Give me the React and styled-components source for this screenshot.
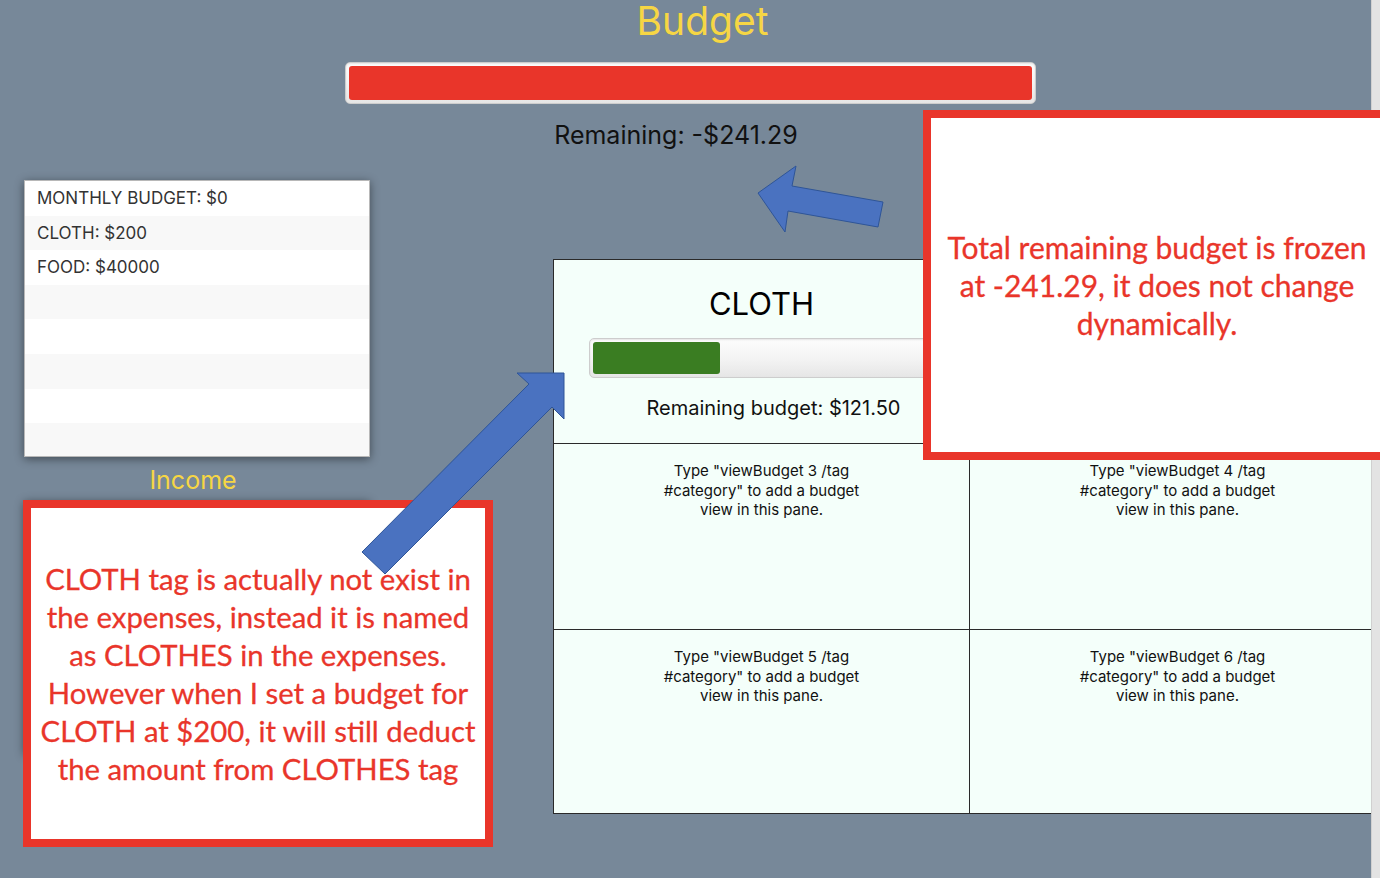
import React from 'react';
import styled, { createGlobalStyle } from 'styled-components';

const GlobalStyle = createGlobalStyle`
  html, body {
    margin: 0;
    padding: 0;
    overflow: hidden;
    background: #778899;
  }
  * { box-sizing: border-box; }
`;

const Screen = styled.div`
  position: relative;
  width: 1380px;
  height: 878px;
  overflow: hidden;
  display: flex;
  font-family: Inter, "Liberation Sans", sans-serif;
`;

const Main = styled.main`
  width: 1371px;
  height: 100%;
  flex-shrink: 0;
  overflow: hidden;
  background: #778899;
  display: flex;
  flex-direction: column;
`;

const ScrollTrack = styled.div`
  width: 9px;
  flex-shrink: 0;
  background: #e3e3e3;
  border-left: 1px solid #d0d0d0;
`;

const Header = styled.header`
  display: flex;
  flex-direction: column;
  align-items: center;
`;

const Title = styled.h1`
  margin: 0;
  padding-left: ${p => p.$shift || 0}px;
  font-size: 39px;
  line-height: 42px;
  font-weight: 400;
  color: #f6d644;
`;

const Meter = styled.div`
  width: ${p => p.$width}px;
  height: ${p => p.$height}px;
  flex-shrink: 0;
  padding: 3px;
  border: 1px solid #cdcdcd;
  border-radius: 5px;
  background: linear-gradient(#fdfdfd 0%, #f4f4f4 50%, #e6e6e6 100%);
  box-shadow: inset 0 1px 2px rgba(0, 0, 0, 0.1);
`;

const MeterFill = styled.div`
  height: 100%;
  border-radius: 3px;
  background: ${p => p.$color};
`;

const TotalRemaining = styled.div`
  margin-top: 16px;
  margin-right: 19px;
  font-size: 25px;
  line-height: 30px;
  color: #111;
`;

const Body = styled.div`
  display: flex;
  align-items: flex-start;
  gap: 183px;
  padding-left: 24px;
  margin-top: 30px;
`;

const SideColumn = styled.aside`
  width: 346px;
  flex-shrink: 0;
  display: flex;
  flex-direction: column;
`;

const ListPanel = styled.div`
  height: ${p => p.$height}px;
  background: #fff;
  border: 1px solid #b8b8b8;
  box-shadow: 0 2px 9px rgba(0, 0, 0, 0.45);
  overflow: hidden;
`;

const ListRow = styled.div`
  height: 34.6px;
  line-height: 34.6px;
  padding-left: 12px;
  font-size: 17px;
  color: #333;
  white-space: nowrap;

  &:nth-child(even) {
    background: #f8f8f8;
  }
`;

const SectionLabel = styled.div`
  padding: 4px 8px 0 0;
  text-align: center;
  font-size: 25px;
  line-height: 39px;
  color: #f6d644;
`;

const BudgetGrid = styled.section`
  margin-top: 79px;
  flex-shrink: 0;
  display: grid;
  grid-template-columns: repeat(2, 416px);
  grid-template-rows: 184px 186px 184px;
  border-top: 1px solid #2a2a2a;
  border-left: 1px solid #2a2a2a;
  background: #f4fffa;
`;

const Pane = styled.div`
  display: flex;
  flex-direction: column;
  align-items: center;
  border-right: 1px solid #2a2a2a;
  border-bottom: 1px solid #2a2a2a;
  color: #111;
`;

const PaneTitle = styled.div`
  margin-top: 25px;
  font-size: 31px;
  line-height: 38px;
  color: #000;
`;

const PaneMeter = styled.div`
  margin-top: 15px;
`;

const PaneNote = styled.div`
  margin-top: 17px;
  padding-left: 24px;
  font-size: 20px;
  line-height: 26px;
`;

const Placeholder = styled.p`
  margin: 0;
  padding-top: 17px;
  max-width: 210px;
  text-align: center;
  font-size: 15px;
  line-height: 19.5px;
`;

const Callout = styled.div`
  position: absolute;
  left: ${p => p.$x}px;
  top: ${p => p.$y}px;
  width: ${p => p.$w}px;
  height: ${p => p.$h}px;
  border: 8px solid #e9352a;
  background: #fff;
  display: flex;
  flex-direction: column;
  align-items: center;
  justify-content: center;
  text-align: center;
  font-family: Lato, "Open Sans", sans-serif;
  font-size: ${p => p.$size}px;
  line-height: 38px;
  color: #e9352a;
  -webkit-text-stroke: 0.3px #e9352a;
`;

const CalloutLine = styled.span`
  display: block;
  white-space: nowrap;
`;

const ArrowLayer = styled.svg`
  position: absolute;
  left: 0;
  top: 0;
  pointer-events: none;
`;

const budgets = [
  { tag: 'MONTHLY BUDGET', amount: 0 },
  { tag: 'CLOTH', amount: 200 },
  { tag: 'FOOD', amount: 40000 },
];

const leftNote = [
  'CLOTH tag is actually not exist in',
  'the expenses, instead it is named',
  'as CLOTHES in the expenses.',
  'However when I set a budget for',
  'CLOTH at $200, it will still deduct',
  'the amount from CLOTHES tag',
];

const rightNote = [
  'Total remaining budget is frozen',
  'at -241.29, it does not change',
  'dynamically.',
];

const placeholder = n =>
  `Type "viewBudget ${n} /tag #category" to add a budget view in this pane.`;

const App = () => {
  const rows = Array.from({ length: 8 }, (_, i) => budgets[i]);
  const clothUsed = 37.6; // % of bar filled for the CLOTH budget

  return (
    <Screen>
      <GlobalStyle />
      <Main>
        <Header>
          <Title $shift={34}>Budget</Title>
          <Meter $width={691} $height={42} style={{ marginTop: 20, marginLeft: 10 }}>
            <MeterFill $color="#e9352a" style={{ width: '100%' }} />
          </Meter>
          <TotalRemaining>Remaining: -$241.29</TotalRemaining>
        </Header>

        <Body>
          <SideColumn>
            <ListPanel $height={277}>
              {rows.map((r, i) => (
                <ListRow key={i}>{r ? `${r.tag}: $${r.amount}` : ''}</ListRow>
              ))}
            </ListPanel>
            <SectionLabel>Income</SectionLabel>
            <ListPanel $height={253}>
              {Array.from({ length: 8 }, (_, i) => (
                <ListRow key={i} />
              ))}
            </ListPanel>
          </SideColumn>

          <BudgetGrid>
            <Pane>
              <PaneTitle>CLOTH</PaneTitle>
              <PaneMeter>
                <Meter $width={346} $height={40}>
                  <MeterFill $color="#3a7d22" style={{ width: `${clothUsed}%` }} />
                </Meter>
              </PaneMeter>
              <PaneNote>Remaining budget: $121.50</PaneNote>
            </Pane>
            {[2, 3, 4, 5, 6].map(n => (
              <Pane key={n}>
                <Placeholder>{placeholder(n)}</Placeholder>
              </Pane>
            ))}
          </BudgetGrid>
        </Body>
      </Main>
      <ScrollTrack />

      <Callout $x={923} $y={110} $w={468} $h={350} $size={30}>
        {rightNote.map(l => <CalloutLine key={l}>{l}</CalloutLine>)}
      </Callout>
      <Callout $x={23} $y={500} $w={470} $h={347} $size={29.3}>
        {leftNote.map(l => <CalloutLine key={l}>{l}</CalloutLine>)}
      </Callout>

      <ArrowLayer width="1380" height="878" viewBox="0 0 1380 878">
        <polygon
          points="758,193 796,166 792,186 883,202 878,227 788,211 785,232"
          fill="#4a72c0"
          stroke="#2f5597"
          strokeWidth="1"
          strokeLinejoin="miter"
        />
        <polygon
          points="564,373 564,419 552,407 385,574 362,552 529,384 517,373"
          fill="#4a72c0"
          stroke="#2f5597"
          strokeWidth="1"
          strokeLinejoin="miter"
        />
      </ArrowLayer>
    </Screen>
  );
};

export default App;
